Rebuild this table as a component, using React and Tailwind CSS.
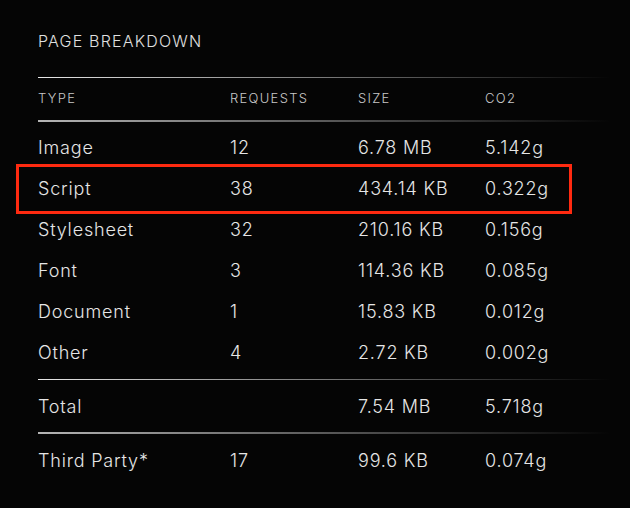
import React from 'react';

const rows = [
  { type: 'Image', requests: '12', size: '6.78 MB', co2: '5.142g' },
  { type: 'Script', requests: '38', size: '434.14 KB', co2: '0.322g', marked: true },
  { type: 'Stylesheet', requests: '32', size: '210.16 KB', co2: '0.156g' },
  { type: 'Font', requests: '3', size: '114.36 KB', co2: '0.085g' },
  { type: 'Document', requests: '1', size: '15.83 KB', co2: '0.012g' },
  { type: 'Other', requests: '4', size: '2.72 KB', co2: '0.002g' },
];

const cols = 'grid grid-cols-[192px_128px_127px_1fr] items-center';
const body = 'text-[18px] font-[350] tracking-[0.045em] text-[#e6e6e6]';

const Rule = ({ thick }) => (
  <div
    className={
      thick
        ? 'h-[2px] w-[572px] bg-gradient-to-r from-[#b5b5b5] via-[#5a5a5a] to-transparent'
        : 'h-px w-[572px] bg-gradient-to-r from-[#e8e8e8] via-[#7a7a7a] to-transparent'
    }
  />
);

const Row = ({ row }) => (
  <div className={`${cols} ${body} relative h-[41px]`}>
    {row.marked && (
      <div className="absolute -left-[22px] top-[-4px] h-[50px] w-[556px] border-[3px] border-[#ff2a10]" />
    )}
    <span>{row.type}</span>
    <span>{row.requests}</span>
    <span>{row.size}</span>
    <span>{row.co2}</span>
  </div>
);

const App = () => {
  return (
    <div
      className="h-[508px] w-[630px] overflow-hidden bg-[#050505] px-[38px] pt-[30px]"
      style={{ fontFamily: 'Inter, "Noto Sans", sans-serif' }}
    >
      <h2 className="text-[16px] font-[350] leading-[22px] tracking-[0.075em] text-[#e0e0e0]">PAGE BREAKDOWN</h2>

      <div className="mt-[25px]">
        <Rule />
        {/* header */}
        <div className={`${cols} h-[42px] text-[13px] font-[350] tracking-[0.1em] text-[#c8c8c8]`}>
          <span>TYPE</span>
          <span>REQUESTS</span>
          <span>SIZE</span>
          <span>CO2</span>
        </div>
        <Rule thick />

        <div className="pt-[5px] pb-[6px]">
          {rows.map((r) => (
            <Row key={r.type} row={r} />
          ))}
        </div>

        <Rule />
        <div className={`${cols} ${body} h-[52px]`}>
          <span>Total</span>
          <span></span>
          <span>7.54 MB</span>
          <span>5.718g</span>
        </div>
        <Rule thick />
        <div className={`${cols} ${body} h-[52px]`}>
          <span>Third Party*</span>
          <span>17</span>
          <span>99.6 KB</span>
          <span>0.074g</span>
        </div>
      </div>
    </div>
  );
};

export default App;
